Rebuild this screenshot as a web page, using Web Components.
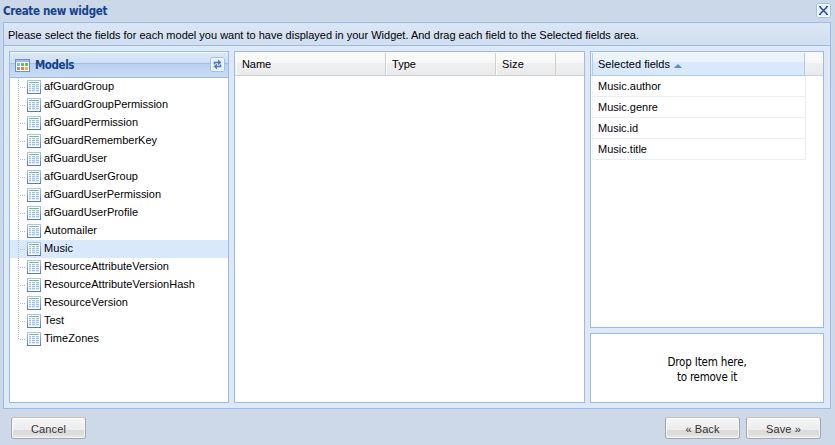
<!DOCTYPE html>
<html lang="en"><head><meta charset="utf-8"><title>Create new widget</title>
<style>
html,body{margin:0;height:100%;overflow:hidden}
body{font:11px "Liberation Sans",Arial,sans-serif;color:#000;background:#cdd9e8}
</style></head><body>
<widget-window></widget-window>
<script>
const define=(name,html,init)=>customElements.define(name,class extends HTMLElement{
  connectedCallback(){
    if(this.shadowRoot)return;
    this.attachShadow({mode:'open'}).innerHTML='<style>*{box-sizing:border-box}</style>'+html;
    if(init)init.call(this,this.shadowRoot);
  }
});

/* Text run tracked to a fixed width */
define('fit-text','<style>:host{display:inline-block;white-space:nowrap}span{display:inline-block}</style><span><slot></slot></span>',function(r){
  const s=r.querySelector('span'),w=+this.getAttribute('w'),n=this.textContent.length;
  s.style.letterSpacing=((w-s.getBoundingClientRect().width)/n)+'px';
});

define('tool-button',`<style>:host{display:block;width:15px;height:15px}svg{display:block}</style>
<svg width="15" height="15" viewBox="0 0 15 15"><rect x=".5" y=".5" width="14" height="14" rx="2.5" fill="#e6f0fb" stroke="#9dbfeb"/><rect x="1.5" y="1.5" width="12" height="12" rx="1" fill="none" stroke="#fff"/><g></g></svg>`,function(r){
  r.querySelector('g').innerHTML=this.getAttribute('icon')==='close'
  ?'<path d="M4 4l7 7M11 4l-7 7" stroke="#2d4b8e" stroke-width="1.5"/><path d="M3 3h2v1h-2zM10 3h2v1h-2zM3 11h2v1h-2zM10 11h2v1h-2z" fill="#2d4b8e"/>'
  :'<path d="M4.5 7.5V5.5H9M10.5 7.5v2H6" fill="none" stroke="#4a7dbb" stroke-width="1.6"/><path d="M8 2.5L11.5 5.5 8 8.3zM7 6.7L3.5 9.5 7 12.5z" fill="#4a7dbb"/>';
});

define('push-button',`<style>:host{display:block;width:75px;height:22px}
button{display:flex;align-items:center;justify-content:center;width:100%;height:100%;padding:2px 0 0;border:1px solid #a5a5a5;border-top-color:#c6c2be;border-bottom-color:#aaa;border-radius:3px;font:11px "Liberation Sans",Arial,sans-serif;color:#333;
background:linear-gradient(#fff 0 1px,#f5f5f5 1px,#ececec 12px,#dadada 12px,#dedede 17px,#f4f4f4 20px);box-shadow:inset 1px 0 #fff,inset -1px 0 #f5f5f5}</style><button><slot></slot></button>`);

define('tree-node',`<style>:host{display:flex;height:18px;padding-left:8px;align-items:center}
:host([selected]){background:#d9e8fb}
svg{display:block;flex:none}.label{margin-left:2px;line-height:17px;height:18px}</style>
<svg width="9" height="18"><path class="v" d="M.5 0V18" stroke="#bababa" stroke-dasharray="1 1"/><path d="M2 9.5h5" stroke="#bababa" stroke-dasharray="1 1"/></svg>
<svg width="15" height="18" viewBox="0 0 15 18"><defs><linearGradient id="b" x2="0" y2="1"><stop stop-color="#a6c5ec"/><stop offset="1" stop-color="#4f7fbf"/></linearGradient></defs>
<rect x=".5" y="2.5" width="13" height="13" fill="#fff" stroke="url(#b)"/><path d="M2 4.5h10" stroke="#78bd76"/><path d="M2 6h10v8H2z" fill="#a3c0ea"/><path d="M2 7.5h10M2 9.5h10M2 11.5h10M2 13.5h10" stroke="#eef4fd" stroke-width=".8"/><path d="M4.5 6v8M8.5 6v8" stroke="#fff"/></svg>
<span class="label"><slot></slot></span>`,function(r){
  if(this.hasAttribute('last'))r.querySelector('.v').setAttribute('d','M.5 0V10');
});

define('model-tree',`<style>:host{display:block;width:220px;height:352px;border:1px solid #99bbe8;background:#fff}
header{display:flex;align-items:center;height:26px;padding:0 3px 0 5px;border-bottom:1px solid #99bbe8;background:linear-gradient(#f4f8fd 0 1px,#dbe7f6 1px,#cedff5 11px,#9fc0e8 11px 12px,#b9d0ef 12px,#cbddf3 25px);font:bold 11.5px "DejaVu Sans Condensed","DejaVu Sans",sans-serif;color:#15428b}
.t{margin-left:5px;padding-top:1px}tool-button{margin-left:auto}svg{display:block;margin-top:2px}</style>
<header><svg width="15" height="13"><rect x=".5" y=".5" width="14" height="12" fill="#fff" stroke="#6e8fbd"/><path d="M1 1h13v2H1z" fill="#9ebee9"/><path d="M2 4h3v3H2z" fill="#83b8ee"/><path d="M6 4h3v3H6zM10 4h3v3h-3z" fill="#72b46c"/><path d="M2 8h3v3H2z" fill="#72b46c"/><path d="M6 8h3v3H6z" fill="#e67b5c"/><path d="M10 8h3v3h-3z" fill="#edb24b"/></svg>
<span class="t"><fit-text w="39">Models</fit-text></span><tool-button icon="refresh"></tool-button></header><div id="list"></div>`,function(r){
  const m=[['afGuardGroup',70],['afGuardGroupPermission',124],['afGuardPermission',94],['afGuardRememberKey',113],['afGuardUser',63],['afGuardUserGroup',94],['afGuardUserPermission',117],['afGuardUserProfile',94],['Automailer',53],['Music',29],['ResourceAttributeVersion',125],['ResourceAttributeVersionHash',151],['ResourceVersion',84],['Test',20],['TimeZones',55]];
  r.querySelector('#list').innerHTML=m.map(([t,w],i)=>`<tree-node${t==='Music'?' selected':''}${i===14?' last':''}><fit-text w="${w}">${t}</fit-text></tree-node>`).join('');
});

define('grid-header',`<style>:host{display:flex;height:24px;padding-left:1px;border-bottom:1px solid #d0d0d0;background:linear-gradient(#fafafa,#f7f7f7 11px,#efefef 11px,#e9ebed);box-sizing:border-box}</style><slot></slot>`);
define('grid-column',`<style>:host{display:block;flex:none;width:var(--w);padding-left:5px;border-right:1px solid #d0d0d0;border-left:1px solid #fff;margin-top:1px;height:22px;line-height:22px;box-sizing:border-box}
:host([sorted]){height:23px;border-color:#aaccf6;background:linear-gradient(#ebf3fd 9px,#d9e8fb 9px);border-bottom:1px solid #aaccf6}
i{display:none}:host([sorted]) i{display:inline-block;margin-left:4px;border:4px solid transparent;border-top:0;border-bottom-color:#5b8acb;vertical-align:0}</style><slot></slot><i></i>`);

define('fields-grid',`<style>:host{display:block;width:351px;height:352px;border:1px solid #99bbe8;background:#fff}</style>
<grid-header><grid-column style="--w:150px"><fit-text w="29">Name</fit-text></grid-column><grid-column style="--w:110px"><fit-text w="24">Type</fit-text></grid-column><grid-column style="--w:60px"><fit-text w="22">Size</fit-text></grid-column></grid-header>`);

define('selected-grid',`<style>:host{display:block;width:234px;height:277px;border:1px solid #99bbe8;background:#fff}
.row{width:214px;height:21px;margin-left:1px;padding-left:5px;line-height:20px;border-right:1px solid #ededed;border-bottom:1px solid #ededed;border-left:1px solid #f5f5f5}</style>
<grid-header><grid-column sorted style="--w:213px"><fit-text w="72">Selected fields</fit-text></grid-column></grid-header>
<div class="row"><fit-text w="63">Music.author</fit-text></div><div class="row"><fit-text w="60">Music.genre</fit-text></div><div class="row"><fit-text w="40">Music.id</fit-text></div><div class="row"><fit-text w="49">Music.title</fit-text></div>`);

define('drop-zone',`<style>:host{display:flex;flex-direction:column;align-items:center;width:234px;height:70px;padding-top:21px;border:1px solid #99bbe8;background:#fff;font:11.5px/15px "DejaVu Sans Condensed","DejaVu Sans",sans-serif;box-sizing:border-box}</style>
<fit-text w="79">Drop Item here,</fit-text><fit-text w="60">to remove it</fit-text>`);

define('widget-window',`<style>:host{display:flex;flex-direction:column;width:835px;height:445px;background:linear-gradient(#cad8ea,#cdd9e8)}
.title{display:flex;height:22px;padding:3px 4px 0 3px;font:bold 11.5px/16px "DejaVu Sans Condensed","DejaVu Sans",sans-serif;color:#15428b;justify-content:space-between}
.body{width:828px;height:387px;margin-left:3px;border:1px solid #99bbe8;background:#dfe8f6}
.info{height:23px;padding-left:4px;line-height:24px;border-bottom:1px solid #99bbe8;background:linear-gradient(#dce7f4,#d0def0)}
.cols{display:flex;gap:5px;padding:5px 5px}
model-tree,fields-grid,selected-grid{box-sizing:border-box}
.right{display:flex;flex-direction:column;gap:5px}
footer{display:flex;gap:6px;padding:8px 14px 0 11px}.sp{flex:1}</style>
<div class="title"><fit-text w="104">Create new widget</fit-text><tool-button icon="close"></tool-button></div>
<div class="body"><div class="info"><fit-text w="631">Please select the fields for each model you want to have displayed in your Widget. And drag each field to the Selected fields area.</fit-text></div>
<div class="cols"><model-tree></model-tree><fields-grid></fields-grid><div class="right"><selected-grid></selected-grid><drop-zone></drop-zone></div></div></div>
<footer><push-button><fit-text w="35">Cancel</fit-text></push-button><span class="sp"></span><push-button><fit-text w="34">« Back</fit-text></push-button><push-button><fit-text w="35">Save »</fit-text></push-button></footer>`);
</script></body></html>
